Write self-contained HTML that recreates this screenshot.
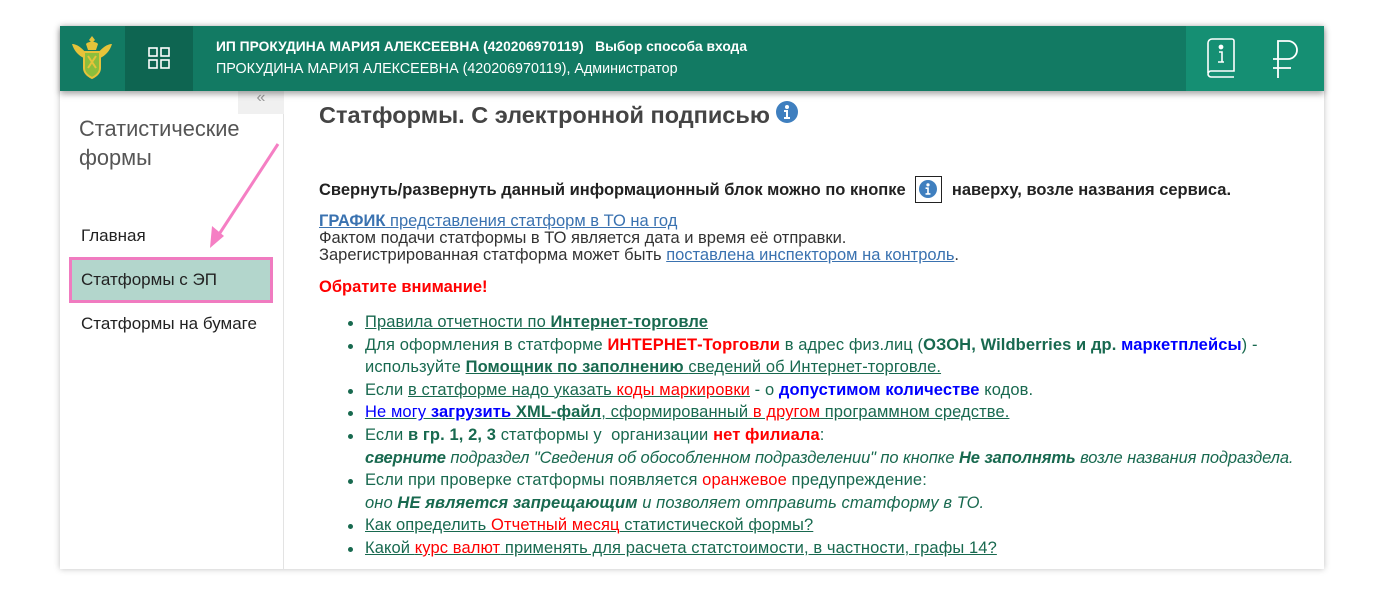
<!DOCTYPE html>
<html><head><meta charset="utf-8"><style>
*{margin:0;padding:0;box-sizing:border-box}
body{width:1386px;height:595px;background:#fff;font-family:"Liberation Sans",sans-serif;position:relative;overflow:hidden}
.card{position:absolute;left:60px;top:26px;width:1264px;height:543px;background:#fff;box-shadow:0 0 6px rgba(0,0,0,.25)}
.hdr{position:absolute;left:0;top:0;width:1264px;height:65px;background:#127a63;box-shadow:0 3px 6px rgba(0,0,0,.35);z-index:2}
.grid{position:absolute;left:65px;top:0;width:68px;height:65px;background:#0e6551}
.rt{position:absolute;left:1126px;top:0;width:138px;height:65px;background:#158f73}
.h1{position:absolute;left:156px;top:13px;color:#fff;font-size:13.8px;font-weight:bold}
.h2{position:absolute;left:156px;top:35px;color:#fff;font-size:14.3px}
.side{position:absolute;left:0;top:65px;width:224px;height:478px;border-right:1px solid #e3e3e3}
.tab{position:absolute;left:178px;top:65px;width:46px;height:23px;background:#f0f0f0;color:#999;font-size:16px;text-align:center;line-height:14px}
.st{position:absolute;left:19px;top:88px;font-size:21.8px;color:#555;line-height:29px}
.m{position:absolute;left:21px;font-size:17px;color:#222}
.sel{position:absolute;left:9px;top:231px;width:204px;height:46px;background:#b3d6cc;border:3px solid #f07bc0}
.c{position:absolute;left:259px;font-size:16.5px;color:#333;white-space:nowrap}
ul{list-style:none}
li{position:relative;padding-left:46px;line-height:22.6px;font-size:16.5px;letter-spacing:.1px;color:#18694f;font-weight:bold}
li:before{content:"";position:absolute;left:29px;top:10px;width:5px;height:5px;border-radius:50%;background:#18694f}
.n{font-weight:normal}
.r{color:#f00}.b{color:#00f}
i{font-style:italic}
.it{letter-spacing:-.1px}
</style></head><body>
<div class="card">
<div class="hdr">
 <svg style="position:absolute;left:6px;top:6px" width="52" height="52" viewBox="0 0 52 52"><path d="M26 4l3 4-3 3-3-3z M6 12c5 0 10 4 14 9l-2 5c-5-2-10-7-12-14z M46 12c-5 0-10 4-14 9l2 5c5-2 10-7 12-14z" fill="#e6c33a"/><path d="M18 20h16v16c0 5-4 8-8 10-4-2-8-5-8-10z" fill="#8cbe3c" stroke="#e6c33a" stroke-width="2"/><path d="M20 12c2-3 10-3 12 0l-2 6h-8z" fill="#e6c33a"/><path d="M22 24l8 12M30 24l-8 12" stroke="#e6c33a" stroke-width="2"/></svg>
 <div class="grid"><svg style="position:absolute;left:23px;top:21px" width="22" height="22" viewBox="0 0 22 22" fill="none" stroke="#fff" stroke-width="1.6"><rect x="1" y="1" width="8" height="8"/><rect x="13" y="1" width="8" height="8"/><rect x="1" y="13" width="8" height="8"/><rect x="13" y="13" width="8" height="8"/></svg></div>
 <div class="h1">ИП ПРОКУДИНА МАРИЯ АЛЕКСЕЕВНА (420206970119) &nbsp; Выбор способа входа</div>
 <div class="h2">ПРОКУДИНА МАРИЯ АЛЕКСЕЕВНА (420206970119), Администратор</div>
 <div class="rt">
  <svg style="position:absolute;left:18px;top:11px" width="34" height="42" viewBox="0 0 34 42" fill="none" stroke="#fff" stroke-width="1.6"><path d="M4 36V6a4 4 0 014-4h20a2 2 0 012 2v30H7a3 3 0 00-3 3 3 3 0 003 3h23"/><circle cx="17" cy="10" r="1.6" fill="#fff"/><path d="M15 15h3v10M14 25h6"/></svg>
  <svg style="position:absolute;left:84px;top:12px" width="32" height="42" viewBox="0 0 32 42" fill="none" stroke="#fff" stroke-width="1.8"><path d="M8 40V3h10a9 9 0 010 18H3M3 30h18"/></svg>
 </div>
</div>
<div class="side"></div>
<div class="tab">«</div>
<div class="st">Статистические<br>формы</div>
<div class="m" style="top:200px">Главная</div>
<div class="sel"></div>
<div class="m" style="top:244px">Статформы с ЭП</div>
<div class="m" style="top:288px">Статформы на бумаге</div>
<svg style="position:absolute;left:140px;top:112px" width="90" height="110"><path d="M78 6L14 104" stroke="#f57fc4" stroke-width="3"/><path d="M10 110l2-22 12 10z" fill="#f57fc4"/></svg>

<div class="c" style="top:75px;font-size:23.5px;font-weight:bold;color:#444">Статформы. С электронной подписью <svg width="22" height="22" viewBox="0 0 22 22" style="vertical-align:0px"><circle cx="11" cy="11" r="11" fill="#3f7fbf"/><circle cx="11" cy="6" r="2" fill="#fff"/><path d="M8 9h4v7h2v2H8v-2h2v-5H8z" fill="#fff"/></svg></div>
<div class="c" style="top:150px;font-weight:bold;color:#222">Свернуть/развернуть данный информационный блок можно по кнопке <span style="display:inline-block;width:27px;height:27px;border:1.5px solid #222;vertical-align:-8px;margin:0 5px;position:relative"><svg style="position:absolute;left:3px;top:3px" width="18" height="18" viewBox="0 0 22 22"><circle cx="11" cy="11" r="11" fill="#3f7fbf"/><circle cx="11" cy="6" r="2" fill="#fff"/><path d="M8 9h4v7h2v2H8v-2h2v-5H8z" fill="#fff"/></svg></span> наверху, возле названия сервиса.</div>
<div class="c" style="top:187px;line-height:17px;color:#333"><u style="color:#3a72b0"><b>ГРАФИК</b> представления статформ в ТО на год</u><br>Фактом подачи статформы в ТО является дата и время её отправки.<br>Зарегистрированная статформа может быть <u style="color:#3a72b0">поставлена инспектором на контроль</u>.</div>
<div class="c" style="top:252px;font-weight:bold;color:#f00">Обратите внимание!</div>
<ul class="c" style="top:285px;left:259px;width:1000px">
<li><u class="n">Правила отчетности по <b>Интернет-торговле</b></u></li>
<li><span class="n">Для оформления в статформе </span><span class="r">ИНТЕРНЕТ-Торговли</span><span class="n"> в адрес физ.лиц (</span>ОЗОН, Wildberries и др. <span class="b">маркетплейсы</span><span class="n">) -<br>используйте </span><u>Помощник по заполнению <span class="n">сведений об Интернет-торговле.</span></u></li>
<li><span class="n">Если <u>в статформе надо указать <span class="r">коды маркировки</span></u> - о </span><span class="b">допустимом количестве</span><span class="n"> кодов.</span></li>
<li><u><span class="b n">Не могу </span><span class="b">загрузить</span> XML-файл<span class="n">, сформированный <span class="r">в другом</span> программном средстве.</span></u></li>
<li><span class="n">Если </span>в гр. 1, 2, 3 <span class="n">статформы у &nbsp;организации </span><span class="r">нет филиала</span><span class="n">:</span><br><span class="it"><i>сверните</i><i class="n"> подраздел "Сведения об обособленном подразделении" по кнопке </i><i>Не заполнять</i><i class="n"> возле названия подраздела.</i></span></li>
<li><span class="n">Если при проверке статформы появляется <span class="r">оранжевое</span> предупреждение:</span><br><i class="n">оно </i><i>НЕ является запрещающим</i><i class="n"> и позволяет отправить статформу в ТО.</i></li>
<li><u class="n">Как определить <span class="r">Отчетный месяц</span> статистической формы?</u></li>
<li><u class="n">Какой <span class="r">курс валют</span> применять для расчета статстоимости, в частности, графы 14?</u></li>
</ul>
</div>
</body></html>
